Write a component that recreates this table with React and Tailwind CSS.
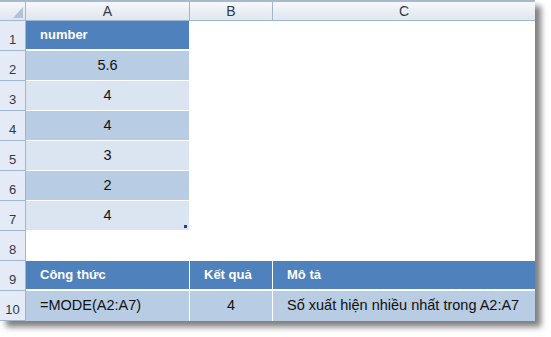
const FONT = { fontFamily: '"Liberation Sans", Arial, sans-serif' }

const values = ['5.6', '4', '4', '3', '2', '4']

function RowNum({ n }) {
  return (
    <div className="w-[26px] shrink-0 h-full flex items-end justify-center pb-[1px] bg-[#e4ebf6] border-r border-b border-[#9eb6ce] text-[13px] text-[#2f3a48]">
      {n}
    </div>
  )
}

function ColHead({ label, className }) {
  return (
    <div className={`h-full flex items-center justify-center border-r border-[#9eb6ce] bg-gradient-to-b from-[#f6f8fb] to-[#dfe6ef] text-[14px] text-[#2f3a48] ${className}`}>
      {label}
    </div>
  )
}

export default function App() {
  return (
    <div className="w-[551px] h-[337px] bg-white" style={FONT}>
      <div className="w-[535px] bg-white border-t-2 border-[#a8b9cf] shadow-[6px_6px_6px_rgba(0,0,0,0.5)]">
        {/* column letters */}
        <div className="flex h-[19px] border-b border-[#9eb6ce]">
          <div className="w-[26px] shrink-0 h-full border-r border-[#9eb6ce] bg-gradient-to-b from-[#f6f8fb] to-[#dfe6ef] flex items-end justify-end pr-[2px] pb-[2px]">
            <svg width="10" height="11" viewBox="0 0 10 11">
              <polygon points="10,0 10,11 0,11" fill="#b3c2d6" />
            </svg>
          </div>
          <ColHead label="A" className="w-[164px]" />
          <ColHead label="B" className="w-[83px]" />
          <ColHead label="C" className="flex-1 border-r-0" />
        </div>

        {/* row 1: table header */}
        <div className="flex h-[30px]">
          <RowNum n={1} />
          <div className="w-[164px] h-full bg-[#4f81bd] border-b-2 border-r border-white flex items-center pl-[14px] text-[13px] font-bold text-white">
            number
          </div>
          <div className="w-[83px]" />
          <div className="flex-1" />
        </div>

        {/* rows 2-7: values */}
        {values.map((v, i) => (
          <div key={i} className="flex h-[30px]">
            <RowNum n={i + 2} />
            <div className={`relative w-[164px] h-full border-b border-r border-white flex items-center justify-center text-[14.5px] text-[#111] ${i % 2 === 0 ? 'bg-[#b8cce4]' : 'bg-[#dbe5f1]'}`}>
              {v}
              {i === values.length - 1 && (
                <span className="absolute right-[2px] bottom-[2px] w-[3px] h-[3px] bg-[#1f3f8f]" />
              )}
            </div>
            <div className="w-[83px]" />
            <div className="flex-1" />
          </div>
        ))}

        {/* row 8: empty */}
        <div className="flex h-[30px]">
          <RowNum n={8} />
          <div className="flex-1" />
        </div>

        {/* row 9: result table header */}
        <div className="flex h-[30px]">
          <RowNum n={9} />
          <div className="w-[164px] h-full bg-[#4f81bd] border-b-2 border-r border-white flex items-center pl-[14px] text-[13px] font-bold text-white">
            Công thức
          </div>
          <div className="w-[83px] h-full bg-[#4f81bd] border-b-2 border-r border-white flex items-center pl-[14px] text-[13px] font-bold text-white">
            Kết quả
          </div>
          <div className="flex-1 h-full bg-[#4f81bd] border-b-2 border-white flex items-center pl-[14px] text-[13px] font-bold text-white">
            Mô tả
          </div>
        </div>

        {/* row 10: formula */}
        <div className="flex h-[30px]">
          <RowNum n={10} />
          <div className="w-[164px] h-full bg-[#b8cce4] border-r border-white flex items-center pl-[14px] text-[14.5px] text-[#111]">
            =MODE(A2:A7)
          </div>
          <div className="w-[83px] h-full bg-[#b8cce4] border-r border-white flex items-center justify-center text-[14.5px] text-[#111]">
            4
          </div>
          <div className="flex-1 h-full bg-[#b8cce4] flex items-center pl-[14px] text-[14.5px] text-[#111]">
            Số xuất hiện nhiều nhất trong A2:A7
          </div>
        </div>
      </div>
    </div>
  )
}
